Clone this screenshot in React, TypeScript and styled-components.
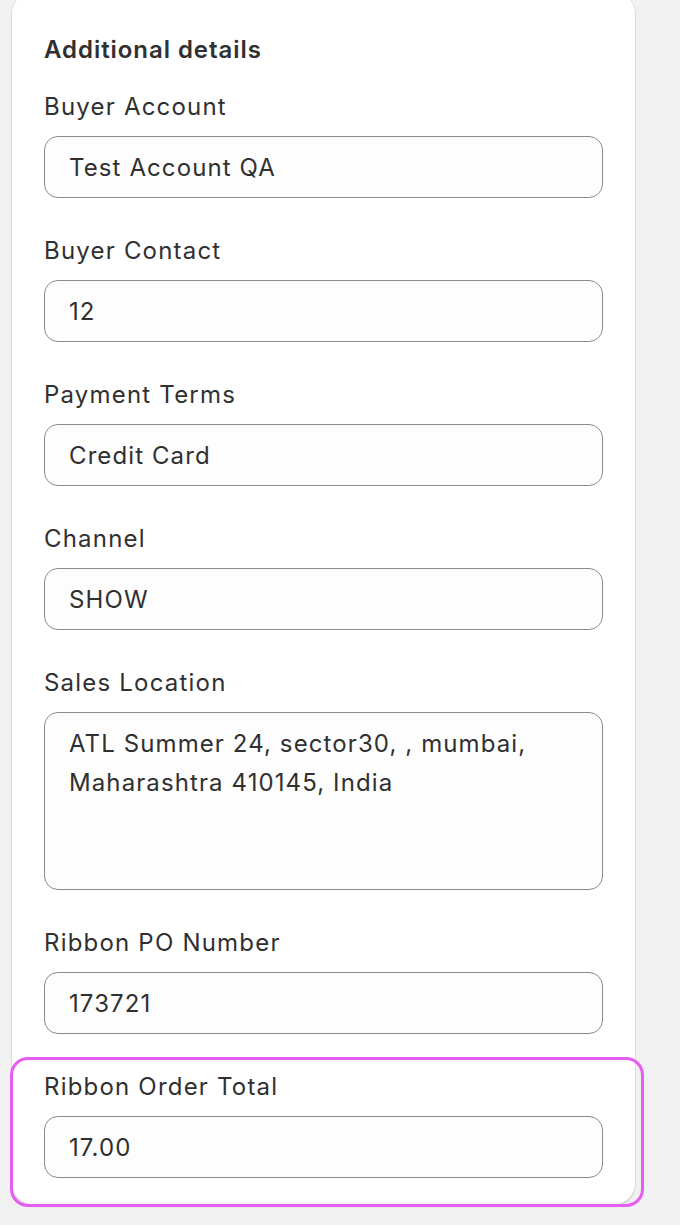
import React from 'react';
import styled, { createGlobalStyle } from 'styled-components';

const GlobalStyle = createGlobalStyle`
  html, body {
    margin: 0;
    padding: 0;
    background: #f1f1f1;
  }
  body {
    font-family: Inter, "Noto Sans", "Liberation Sans", sans-serif;
    color: #303030;
  }
`;

const Page = styled.div`
  min-height: 1225px;
  overflow: hidden;
  background: #f1f1f1;
`;

const Card = styled.section`
  width: 623px;
  margin: -8px 0 0 12px;
  box-sizing: border-box;
  padding: 42px 32px 27px 32px;
  background: #ffffff;
  border-radius: 22px;
  box-shadow: 0 0 0 1px rgba(0, 0, 0, 0.06), 0 2px 2px rgba(0, 0, 0, 0.1);
  display: flex;
  flex-direction: column;
  gap: 37px;
`;

const Heading = styled.h2`
  margin: 0 0 -12px 0;
  font-size: 24px;
  line-height: 32px;
  font-weight: 600;
  letter-spacing: 0.95px;
  color: #303030;
`;

const Field = styled.div`
  position: relative;
  display: flex;
  flex-direction: column;
  gap: 13px;
`;

// pink selection outline drawn over the last field
const Highlight = styled.div`
  position: absolute;
  top: -14px;
  bottom: -29px;
  left: -34px;
  right: -41px;
  border: 3px solid #e75cf1;
  border-radius: 18px;
  pointer-events: none;
`;

const Label = styled.label`
  font-size: 24px;
  line-height: 32px;
  font-weight: 400;
  letter-spacing: 1.2px;
  color: #303030;
`;

const Box = styled.div<{ $tall?: boolean }>`
  box-sizing: border-box;
  height: ${p => (p.$tall ? '178px' : '62px')};
  padding: ${p => (p.$tall ? '11px 24px' : '0 24px')};
  display: flex;
  align-items: ${p => (p.$tall ? 'flex-start' : 'center')};
  background: #fdfdfd;
  border: 1px solid #8a8a8a;
  border-radius: 14px;
  font-size: 24px;
  line-height: 39px;
  letter-spacing: 1.1px;
  color: #303030;
`;

const fields: { label: string; value: string; tall?: boolean; highlight?: boolean }[] = [
  { label: 'Buyer Account', value: 'Test Account QA' },
  { label: 'Buyer Contact', value: '12' },
  { label: 'Payment Terms', value: 'Credit Card' },
  { label: 'Channel', value: 'SHOW' },
  {
    label: 'Sales Location',
    value: 'ATL Summer 24, sector30, , mumbai, Maharashtra 410145, India',
    tall: true,
  },
  { label: 'Ribbon PO Number', value: '173721' },
  { label: 'Ribbon Order Total', value: '17.00', highlight: true },
];

export default function App() {
  return (
    <Page>
      <GlobalStyle />
      <Card>
        <Heading>Additional details</Heading>
        {fields.map(f => (
          <Field key={f.label}>
            {f.highlight && <Highlight />}
            <Label>{f.label}</Label>
            <Box $tall={f.tall}>{f.value}</Box>
          </Field>
        ))}
      </Card>
    </Page>
  );
}
